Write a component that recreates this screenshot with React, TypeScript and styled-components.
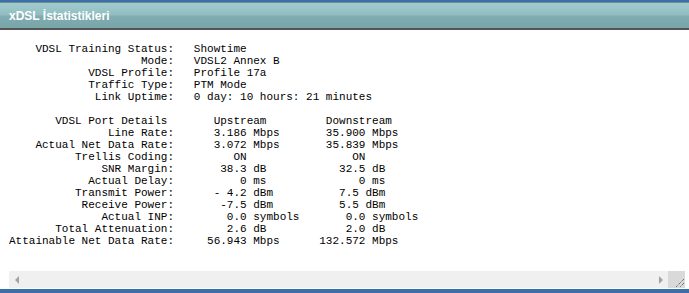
import styled, { createGlobalStyle } from "styled-components";

const GlobalStyle = createGlobalStyle`
  html, body {
    margin: 0;
    padding: 0;
    background: #fff;
  }
`;

const Page = styled.div`
  width: 689px;
  height: 293px;
  display: flex;
  flex-direction: column;
  overflow: hidden;
  background: #fff;
`;

const TopStripe = styled.div`
  height: 2px;
  background: #3c6ea8;
`;

const Header = styled.div`
  height: 25px;
  display: flex;
  align-items: center;
  padding-left: 9px;
  border-top: 1px solid #6d8f92;
  border-bottom: 2px solid #555;
  background: linear-gradient(
    to bottom,
    #a1cbcf 0%,
    #93bec2 45%,
    #7eacb0 55%,
    #78a6a9 100%
  );
`;

const Title = styled.h1`
  margin: 0;
  font-family: "Liberation Sans", Arial, sans-serif;
  font-size: 12px;
  font-weight: bold;
  color: #fff;
`;

const Body = styled.div`
  flex: 1;
  display: flex;
  flex-direction: column;
  justify-content: space-between;
  padding: 13px 4px 1px 9px;
`;

const Stats = styled.pre`
  margin: 0;
  font-family: "Liberation Mono", "Courier New", monospace;
  font-size: 11px;
  line-height: 12px;
  color: #000;
`;

const ScrollBar = styled.div`
  height: 17px;
  display: flex;
  align-items: center;
  background: #f0f0f0;
`;

const Arrow = styled.span<{ $dir: "left" | "right" }>`
  flex-shrink: 0;
  width: 0;
  height: 0;
  border-top: 4px solid transparent;
  border-bottom: 4px solid transparent;
  ${(p) =>
    p.$dir === "left"
      ? "border-right: 4px solid #a3a3a3; margin-left: 6px;"
      : "border-left: 4px solid #a3a3a3; margin-right: 5px;"}
`;

const Track = styled.div`
  flex: 1;
`;

const Grip = styled.div`
  flex-shrink: 0;
  width: 17px;
  height: 17px;
  display: flex;
  align-items: flex-end;
  justify-content: flex-end;
  background: #d9d9d9;
`;

const BottomStripe = styled.div`
  height: 4px;
  background: #3c6ea8;
`;

const stats = `    VDSL Training Status:   Showtime
                    Mode:   VDSL2 Annex B
            VDSL Profile:   Profile 17a
            Traffic Type:   PTM Mode
             Link Uptime:   0 day: 10 hours: 21 minutes

       VDSL Port Details       Upstream         Downstream
               Line Rate:      3.186 Mbps       35.900 Mbps
    Actual Net Data Rate:      3.072 Mbps       35.839 Mbps
          Trellis Coding:         ON                ON
              SNR Margin:       38.3 dB           32.5 dB
            Actual Delay:          0 ms              0 ms
          Transmit Power:      - 4.2 dBm          7.5 dBm
           Receive Power:       -7.5 dBm          5.5 dBm
              Actual INP:        0.0 symbols       0.0 symbols
       Total Attenuation:        2.6 dB            2.0 dB
Attainable Net Data Rate:     56.943 Mbps      132.572 Mbps`;

export default function App() {
  return (
    <Page>
      <GlobalStyle />
      <TopStripe />
      <Header>
        <Title>xDSL İstatistikleri</Title>
      </Header>
      <Body>
        <Stats>{stats}</Stats>
        <ScrollBar>
          <Arrow $dir="left" />
          <Track />
          <Arrow $dir="right" />
          <Grip>
            <svg width="13" height="13" viewBox="0 0 13 13">
              <path
                d="M12 4 L4 12 M12 8 L8 12"
                stroke="#444"
                strokeWidth="1"
                strokeDasharray="1 1"
              />
            </svg>
          </Grip>
        </ScrollBar>
      </Body>
      <BottomStripe />
    </Page>
  );
}
